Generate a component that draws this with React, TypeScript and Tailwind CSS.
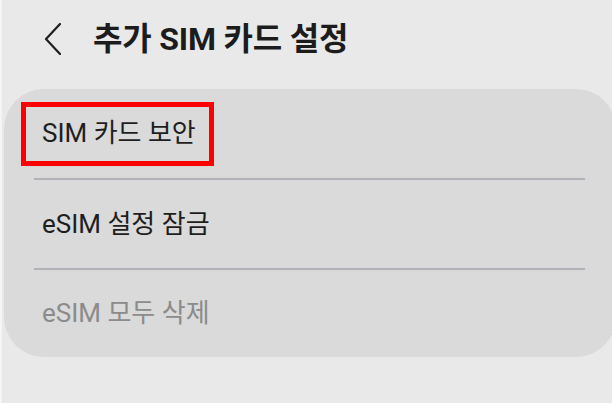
export default function App() {
  const font = { fontFamily: '"Roboto", "Noto Sans CJK KR", sans-serif' };

  return (
    <div
      className="w-[612px] h-[403px] overflow-hidden bg-[#e9e9e9] border-l-2 border-[#f5f5f5]"
      style={font}
    >
      {/* 헤더 */}
      <div className="h-[78px] flex items-center pl-[42px]">
        <svg className="w-[17px] h-[32px]" viewBox="0 0 17 32" fill="none">
          <path
            d="M16 1L2 16l14 15"
            stroke="#1f1f1f"
            strokeWidth={2.2}
            strokeLinecap="round"
            strokeLinejoin="round"
          />
        </svg>
        <h1 className="ml-[32px] text-[32px] font-bold text-[#1c1c1c] tracking-[-0.2px]">
          추가 SIM 카드 설정
        </h1>
      </div>

      {/* 카드 */}
      <div className="mt-[11px] ml-[2px] w-[612px] h-[268px] rounded-[40px] bg-[#dadada] flex flex-col">
        <div className="h-[89px] flex items-center pl-[38px]">
          <span className="-ml-[21px] h-[64px] flex items-center border-[5px] border-[#ff0000] pl-[16px] pr-[13px] text-[26px] text-[#1e1e1e]">
            SIM 카드 보안
          </span>
        </div>
        <div className="h-[2px] ml-[30px] mr-[31px] bg-[#b2b1b7]" />
        <div className="h-[88px] flex items-center pl-[38px] text-[26px] text-[#1e1e1e]">
          eSIM 설정 잠금
        </div>
        <div className="h-[2px] ml-[30px] mr-[31px] bg-[#b2b1b7]" />
        <div className="h-[87px] flex items-center pl-[38px] text-[26px] text-[#8b8b8b]">
          eSIM 모두 삭제
        </div>
      </div>
    </div>
  );
}
